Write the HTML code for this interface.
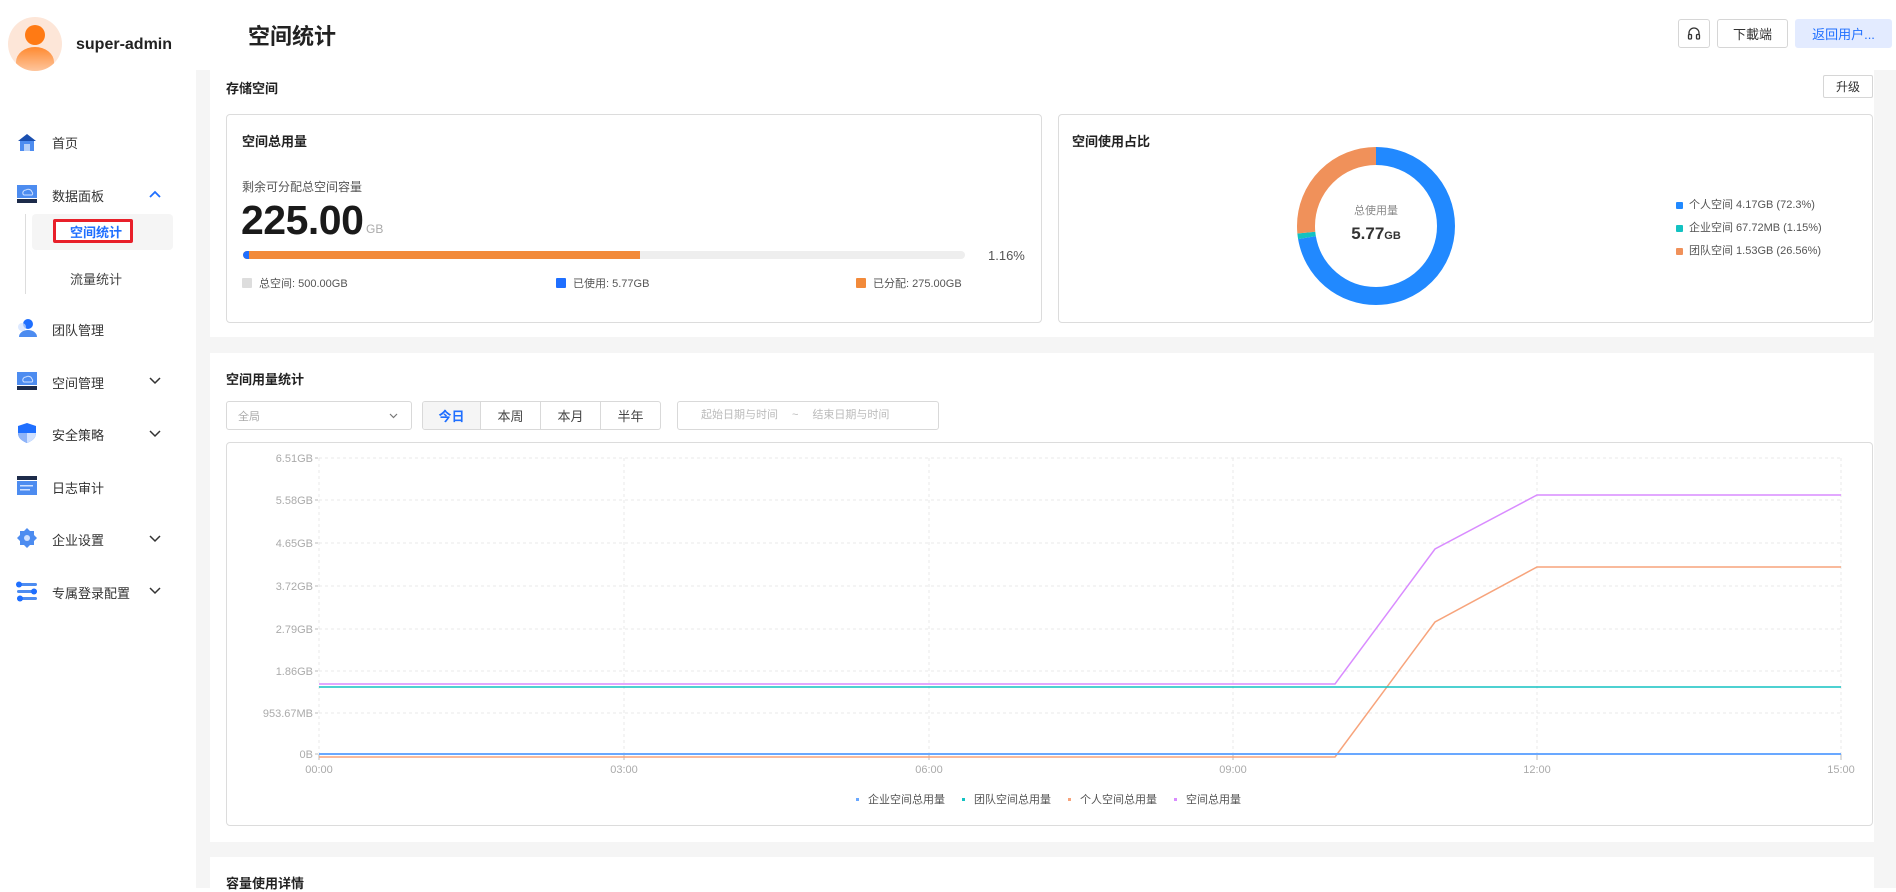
<!DOCTYPE html>
<html><head><meta charset="utf-8"><style>
*{margin:0;padding:0;box-sizing:border-box}
body{width:1896px;height:888px;overflow:hidden;background:#fff;font-family:"Liberation Sans","Noto Sans CJK SC",sans-serif;color:#222;position:relative}
.a{position:absolute;white-space:nowrap}
.side{left:0;top:0;width:196px;height:888px;background:#fff}
.main{left:196px;top:70px;width:1700px;height:818px;background:#f5f5f5}
.panel{background:#fff}
.card{border:1px solid #dcdcdc;border-radius:4px;background:#fff}
.mi{font-size:13px;color:#333}
.btn{border:1px solid #d6d6d6;border-radius:3px;background:#fff;font-size:13px;color:#333;display:flex;align-items:center;justify-content:center}
.ax{font-size:11px;color:#aaa}
.sq{display:inline-block;width:10px;height:10px;border-radius:1px;vertical-align:-1px;margin-right:7px}
</style></head><body>
<div class="a side"></div>
<div class="a main"></div>
<!-- header -->
<div class="a" style="left:8px;top:17px;width:54px;height:54px;border-radius:50%;background:#fde6d8;overflow:hidden">
 <div class="a" style="left:17px;top:8px;width:20px;height:20px;border-radius:50%;background:#ff7a14"></div>
 <div class="a" style="left:8px;top:30px;width:38px;height:30px;border-radius:50% 50% 0 0;background:linear-gradient(#ff8a30,#fdd4b8)"></div>
</div>
<div class="a" style="left:76px;top:36px;font-size:16px;font-weight:bold;color:#222">super-admin</div>
<div class="a" style="left:248px;top:19px;font-size:22px;font-weight:bold;color:#222">空间统计</div>
<div class="a btn" style="left:1678px;top:19px;width:32px;height:29px"><svg width="14" height="15" viewBox="0 0 14 15" fill="none" stroke="#333" stroke-width="1.3"><path d="M2 9V7a5 5 0 0 1 10 0v2"/><rect x="1.5" y="8.5" width="3" height="4.5" rx="1"/><rect x="9.5" y="8.5" width="3" height="4.5" rx="1"/></svg></div>
<div class="a btn" style="left:1717px;top:19px;width:71px;height:29px">下載端</div>
<div class="a btn" style="left:1795px;top:19px;width:97px;height:29px;background:#e3ebff;border-color:#e3ebff;color:#1f6fff">返回用户...</div>

<!-- sidebar menu -->
<svg class="a" style="left:17px;top:132px" width="20" height="20" viewBox="0 0 20 20"><path d="M1 9L10 2l9 7z" fill="#1a4fb0"/><rect x="3" y="9" width="14" height="10" fill="#4d8cf0"/><rect x="7" y="12" width="6" height="7" fill="#b5cff8"/></svg>
<div class="a mi" style="left:52px;top:133px">首页</div>
<svg class="a" style="left:17px;top:185px" width="20" height="18" viewBox="0 0 20 18"><rect x="0" y="0" width="20" height="13" fill="#4d8cf0"/><path d="M6 9a3 3 0 0 1 3-4 4 4 0 0 1 6 2 2 2 0 0 1 0 3H7a2 2 0 0 1-1-1z" fill="none" stroke="#cfe0ff" stroke-width="1"/><rect x="0" y="14" width="20" height="4" fill="#1d2b4a"/></svg>
<div class="a mi" style="left:52px;top:186px">数据面板</div>
<svg class="a" style="left:149px;top:190px" width="12" height="8"><path d="M1 7l5-5 5 5" fill="none" stroke="#1f6fff" stroke-width="1.8"/></svg>
<div class="a" style="left:25px;top:214px;width:1px;height:80px;background:#ddd"></div>
<div class="a" style="left:32px;top:214px;width:141px;height:36px;background:#f5f5f5;border-radius:4px"></div>
<div class="a" style="left:53px;top:219px;width:80px;height:24px;border:3px solid #e8202a;border-radius:2px;background:#fff"></div>
<div class="a" style="left:70px;top:222px;font-size:13px;color:#1f6fff;font-weight:bold">空间统计</div>
<div class="a mi" style="left:70px;top:269px;color:#444">流量统计</div>
<svg class="a" style="left:17px;top:318px" width="20" height="20" viewBox="0 0 20 20"><circle cx="11" cy="6" r="5" fill="#1f6fff"/><path d="M2 19a9 7 0 0 1 18 0z" fill="#4d8cf0"/><circle cx="5" cy="9" r="4" fill="#cfe0ff" opacity=".7"/></svg>
<div class="a mi" style="left:52px;top:320px">团队管理</div>
<svg class="a" style="left:17px;top:372px" width="20" height="18" viewBox="0 0 20 18"><rect x="0" y="0" width="20" height="13" fill="#4d8cf0"/><path d="M6 9a3 3 0 0 1 3-4 4 4 0 0 1 6 2 2 2 0 0 1 0 3H7a2 2 0 0 1-1-1z" fill="none" stroke="#cfe0ff" stroke-width="1"/><rect x="0" y="14" width="20" height="4" fill="#1d2b4a"/></svg>
<div class="a mi" style="left:52px;top:373px">空间管理</div>
<svg class="a" style="left:149px;top:377px" width="12" height="8"><path d="M1 1l5 5 5-5" fill="none" stroke="#333" stroke-width="1.5"/></svg>
<svg class="a" style="left:17px;top:423px" width="20" height="20" viewBox="0 0 20 20"><path d="M1 3L10 0l9 3v7c0 5-4 8-9 10C5 18 1 15 1 10z" fill="#1f6fff"/><path d="M10 10h9c0 5-4 8-9 10z" fill="#cfe0ff"/><path d="M1 10h9v10C5 18 1 15 1 10z" fill="#8fb4f8"/></svg>
<div class="a mi" style="left:52px;top:425px">安全策略</div>
<svg class="a" style="left:149px;top:430px" width="12" height="8"><path d="M1 1l5 5 5-5" fill="none" stroke="#333" stroke-width="1.5"/></svg>
<svg class="a" style="left:17px;top:476px" width="20" height="20" viewBox="0 0 20 20"><rect x="0" y="0" width="20" height="4" fill="#1d2b4a"/><rect x="0" y="5" width="20" height="14" fill="#4d8cf0"/><rect x="3" y="9" width="13" height="1.5" fill="#cfe0ff"/><rect x="3" y="13" width="10" height="1.5" fill="#cfe0ff"/></svg>
<div class="a mi" style="left:52px;top:478px">日志审计</div>
<svg class="a" style="left:16px;top:527px" width="22" height="22" viewBox="0 0 22 22"><path d="M11 1l3 3h4v4l3 3-3 3v4h-4l-3 3-3-3H4v-4l-3-3 3-3V4h4z" fill="#4d8cf0"/><circle cx="11" cy="11" r="3" fill="#cfe0ff"/></svg>
<div class="a mi" style="left:52px;top:530px">企业设置</div>
<svg class="a" style="left:149px;top:535px" width="12" height="8"><path d="M1 1l5 5 5-5" fill="none" stroke="#333" stroke-width="1.5"/></svg>
<svg class="a" style="left:15px;top:580px" width="24" height="22" viewBox="0 0 24 22"><rect x="2" y="3" width="20" height="3" rx="1.5" fill="#4d8cf0"/><rect x="2" y="10" width="20" height="3" rx="1.5" fill="#4d8cf0"/><rect x="2" y="17" width="20" height="3" rx="1.5" fill="#4d8cf0"/><circle cx="4" cy="4.5" r="3" fill="#1f6fff"/><circle cx="19" cy="11.5" r="3" fill="#1f6fff"/><circle cx="5" cy="18.5" r="3" fill="#1f6fff"/></svg>
<div class="a mi" style="left:52px;top:583px">专属登录配置</div>
<svg class="a" style="left:149px;top:587px" width="12" height="8"><path d="M1 1l5 5 5-5" fill="none" stroke="#333" stroke-width="1.5"/></svg>

<!-- panel 1 -->
<div class="a panel" style="left:210px;top:70px;width:1664px;height:267px"></div>
<div class="a" style="left:226px;top:78px;font-size:13px;font-weight:bold">存储空间</div>
<div class="a btn" style="left:1823px;top:75px;width:50px;height:23px;font-size:12px;border-radius:2px">升级</div>
<div class="a card" style="left:226px;top:114px;width:816px;height:209px"></div>
<div class="a" style="left:242px;top:131px;font-size:13px;font-weight:bold;color:#222">空间总用量</div>
<div class="a" style="left:242px;top:178px;font-size:12px;color:#555">剩余可分配总空间容量</div>
<div class="a" style="left:241px;top:197px;font-size:41px;font-weight:bold;color:#1a1a1a;letter-spacing:-0.5px">225.00</div>
<div class="a" style="left:366px;top:222px;font-size:12px;color:#aaa">GB</div>
<div class="a" style="left:243px;top:251px;width:722px;height:8px;background:#eee;border-radius:4px;overflow:hidden">
 <div class="a" style="left:0;top:0;width:397px;height:8px;background:#f28a3a"></div>
 <div class="a" style="left:0;top:0;width:6px;height:8px;background:#1f6fff;border-radius:4px 0 0 4px"></div>
</div>
<div class="a" style="left:988px;top:248px;font-size:13px;color:#555">1.16%</div>
<div class="a" style="left:242px;top:275px;font-size:11px;color:#555"><span class="sq" style="background:#ddd"></span>总空间: 500.00GB</div>
<div class="a" style="left:556px;top:275px;font-size:11px;color:#555"><span class="sq" style="background:#1f6fff"></span>已使用: 5.77GB</div>
<div class="a" style="left:856px;top:275px;font-size:11px;color:#555"><span class="sq" style="background:#f28a3a"></span>已分配: 275.00GB</div>

<div class="a card" style="left:1058px;top:114px;width:815px;height:209px"></div>
<div class="a" style="left:1072px;top:131px;font-size:13px;font-weight:bold;color:#222">空间使用占比</div>
<svg class="a" style="left:1296px;top:146px" width="160" height="160" viewBox="0 0 160 160">
 <g transform="rotate(-90 80 80)" fill="none" stroke-width="18">
  <circle cx="80" cy="80" r="70" stroke="#2189ff" stroke-dasharray="318 440"/>
  <circle cx="80" cy="80" r="70" stroke="#13c2c2" stroke-dasharray="0 318 5.1 440"/>
  <circle cx="80" cy="80" r="70" stroke="#f0915a" stroke-dasharray="0 323.1 116.8 440"/>
 </g>
</svg>
<div class="a" style="left:1336px;top:202px;width:80px;text-align:center;font-size:11px;color:#888">总使用量</div>
<div class="a" style="left:1336px;top:224px;width:80px;text-align:center;font-size:17px;font-weight:bold;color:#333">5.77<span style="font-size:11px">GB</span></div>
<div class="a" style="left:1676px;top:196px;font-size:11px;color:#555"><span class="sq" style="background:#2189ff;width:7px;height:7px;margin-right:6px"></span>个人空间 4.17GB (72.3%)</div>
<div class="a" style="left:1676px;top:219px;font-size:11px;color:#555"><span class="sq" style="background:#13c2c2;width:7px;height:7px;margin-right:6px"></span>企业空间 67.72MB (1.15%)</div>
<div class="a" style="left:1676px;top:242px;font-size:11px;color:#555"><span class="sq" style="background:#f0915a;width:7px;height:7px;margin-right:6px"></span>团队空间 1.53GB (26.56%)</div>

<!-- panel 2 -->
<div class="a panel" style="left:210px;top:353px;width:1664px;height:489px"></div>
<div class="a" style="left:226px;top:369px;font-size:13px;font-weight:bold">空间用量统计</div>
<div class="a" style="left:226px;top:401px;width:186px;height:29px;border:1px solid #d9d9d9;border-radius:3px"></div>
<div class="a" style="left:238px;top:408px;font-size:11px;color:#aaa">全局</div>
<svg class="a" style="left:389px;top:413px" width="9" height="6"><path d="M1 1l3.5 3.5L8 1" fill="none" stroke="#777" stroke-width="1.2"/></svg>
<div class="a" style="left:422px;top:401px;width:239px;height:29px;border:1px solid #d9d9d9;border-radius:3px;display:flex;overflow:hidden;font-size:13px;color:#444">
 <div style="width:58px;background:#f5f5f5;color:#1f6fff;font-weight:bold;display:flex;align-items:center;justify-content:center;border-right:1px solid #d9d9d9">今日</div>
 <div style="width:60px;display:flex;align-items:center;justify-content:center;border-right:1px solid #d9d9d9">本周</div>
 <div style="width:60px;display:flex;align-items:center;justify-content:center;border-right:1px solid #d9d9d9">本月</div>
 <div style="flex:1;display:flex;align-items:center;justify-content:center">半年</div>
</div>
<div class="a" style="left:677px;top:401px;width:262px;height:29px;border:1px solid #d9d9d9;border-radius:3px;font-size:11px;color:#bbb;line-height:27px"><span style="margin-left:23px">起始日期与时间</span><span style="margin-left:14px">~</span><span style="margin-left:14px">结束日期与时间</span></div>

<div class="a card" style="left:226px;top:442px;width:1647px;height:384px"></div>
<svg class="a" style="left:226px;top:442px" width="1647" height="384">
 <g stroke="#e8e8e8" stroke-dasharray="3 3" stroke-width="1">
  <line x1="93" y1="16" x2="1615" y2="16"/><line x1="93" y1="58" x2="1615" y2="58"/><line x1="93" y1="101" x2="1615" y2="101"/><line x1="93" y1="144" x2="1615" y2="144"/><line x1="93" y1="187" x2="1615" y2="187"/><line x1="93" y1="229" x2="1615" y2="229"/><line x1="93" y1="271" x2="1615" y2="271"/>
  <line x1="93" y1="16" x2="93" y2="312"/><line x1="398" y1="16" x2="398" y2="312"/><line x1="703" y1="16" x2="703" y2="312"/><line x1="1007" y1="16" x2="1007" y2="312"/><line x1="1311" y1="16" x2="1311" y2="312"/><line x1="1615" y1="16" x2="1615" y2="312"/>
 </g>
 <g stroke="#bbb"><line x1="89" y1="16" x2="92" y2="16"/><line x1="89" y1="58" x2="92" y2="58"/><line x1="89" y1="101" x2="92" y2="101"/><line x1="89" y1="144" x2="92" y2="144"/><line x1="89" y1="187" x2="92" y2="187"/><line x1="89" y1="229" x2="92" y2="229"/><line x1="89" y1="271" x2="92" y2="271"/><line x1="89" y1="312" x2="92" y2="312"/>
 <line x1="93" y1="312" x2="93" y2="318"/><line x1="398" y1="312" x2="398" y2="318"/><line x1="703" y1="312" x2="703" y2="318"/><line x1="1007" y1="312" x2="1007" y2="318"/><line x1="1311" y1="312" x2="1311" y2="318"/><line x1="1615" y1="312" x2="1615" y2="318"/></g>
 <g font-size="11" fill="#aaa" font-family="Liberation Sans,sans-serif" text-anchor="end">
  <text x="87" y="20">6.51GB</text><text x="87" y="62">5.58GB</text><text x="87" y="105">4.65GB</text><text x="87" y="148">3.72GB</text><text x="87" y="191">2.79GB</text><text x="87" y="233">1.86GB</text><text x="87" y="275">953.67MB</text><text x="87" y="316">0B</text>
 </g>
 <g font-size="11" fill="#aaa" font-family="Liberation Sans,sans-serif" text-anchor="middle">
  <text x="93" y="331">00:00</text><text x="398" y="331">03:00</text><text x="703" y="331">06:00</text><text x="1007" y="331">09:00</text><text x="1311" y="331">12:00</text><text x="1615" y="331">15:00</text>
 </g>
 <polyline fill="none" stroke="#f7a47c" stroke-width="1.5" points="93,315 1109,315 1209,180 1311,125 1615,125"/>
 <polyline fill="none" stroke="#13c2c2" stroke-width="1.5" points="93,245 1615,245"/>
 <polyline fill="none" stroke="#d98cff" stroke-width="1.5" points="93,242 1109,242 1209,107 1311,53 1615,53"/>
 <polyline fill="none" stroke="#69a8ff" stroke-width="2" points="93,312 1615,312"/>
 <g font-size="11" fill="#555" font-family="Liberation Sans,Noto Sans CJK SC,sans-serif">
  <rect x="630" y="356" width="3" height="3" fill="#69a8ff"/><text x="642" y="361">企业空间总用量</text>
  <rect x="736" y="356" width="3" height="3" fill="#13c2c2"/><text x="748" y="361">团队空间总用量</text>
  <rect x="842" y="356" width="3" height="3" fill="#f7a47c"/><text x="854" y="361">个人空间总用量</text>
  <rect x="948" y="356" width="3" height="3" fill="#d98cff"/><text x="960" y="361">空间总用量</text>
 </g>
</svg>

<!-- panel 3 -->
<div class="a panel" style="left:210px;top:857px;width:1664px;height:31px"></div>
<div class="a" style="left:226px;top:873px;font-size:13px;font-weight:bold">容量使用详情</div>
</body></html>
